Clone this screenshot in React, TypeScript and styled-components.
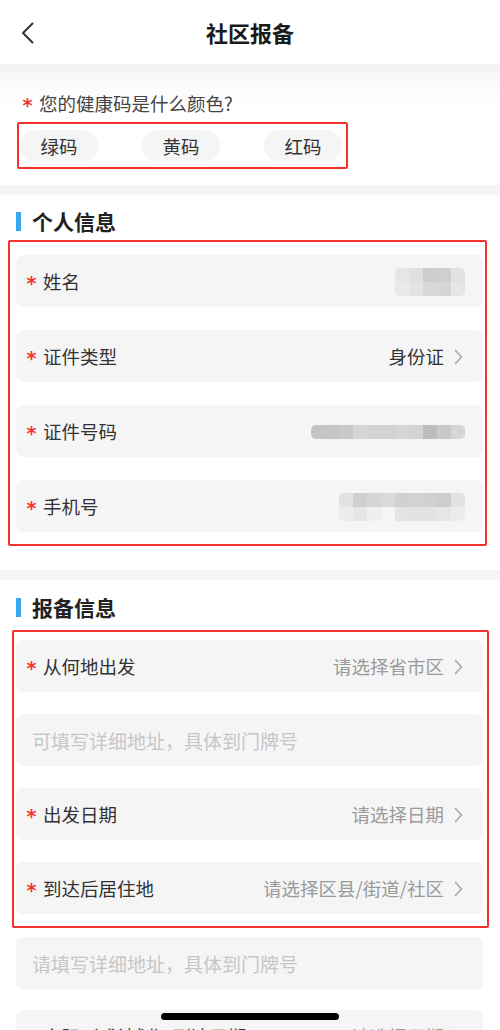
import styled, { createGlobalStyle } from "styled-components";

const GlobalStyle = createGlobalStyle`
    html, body {
        margin: 0;
        padding: 0;
        background: #ffffff;
    }
    body {
        font-family: "Noto Sans CJK SC", "Noto Sans", sans-serif;
        color: #333333;
    }
`;

const Page = styled.div`
    width: 500px;
    background: #ffffff;
`;

const Header = styled.header`
    display: grid;
    grid-template-columns: 1fr auto 1fr;
    align-items: center;
    height: 64px;
    padding: 0 20px;
    box-sizing: border-box;
    h1 {
        margin: 0;
        font-size: 22px;
        font-weight: 700;
        color: #1a1a1a;
        line-height: 1;
        padding-bottom: 1px;
    }
`;

const BackButton = styled.button`
    justify-self: start;
    border: 0;
    padding: 0;
    background: transparent;
    display: flex;
    margin-left: 1px;
    margin-top: 2px;
    svg {
        width: 13px;
        height: 22px;
    }
`;

const HealthSection = styled.section`
    padding: 26px 0 16px;
    background: linear-gradient(180deg, #f2f2f2 0, #fbfbfb 22px, #ffffff 44px);
`;

const Question = styled.div`
    display: flex;
    align-items: center;
    height: 26px;
    padding-left: 22px;
    margin-bottom: 6px;
    font-size: 18.5px;
    color: #444444;
`;

const Star = styled.span`
    color: #f2362f;
    font-family: "DejaVu Sans", sans-serif;
    font-size: 19px;
    font-weight: 700;
    line-height: 1;
    margin-top: 5px;
    width: 11px;
    margin-right: 6px;
    text-align: center;
`;

const Highlight = styled.div<{ $left: number; $width: number; $pad: string }>`
    box-sizing: border-box;
    margin-left: ${(p) => p.$left}px;
    width: ${(p) => p.$width}px;
    padding: ${(p) => p.$pad};
    border: 2px solid #f5312d;
    border-radius: 2px;
`;

const Pills = styled.div`
    display: flex;
    justify-content: space-between;
`;

const Pill = styled.button`
    width: 78px;
    height: 31px;
    border: 0;
    border-radius: 16px;
    background: #f5f5f6;
    font-family: inherit;
    font-size: 18.5px;
    color: #333333;
    padding: 0;
`;

const Band = styled.div`
    height: 10px;
    background: #f5f5f5;
`;

const Section = styled.section<{ $top: number; $bottom: number }>`
    padding: ${(p) => p.$top}px 0 ${(p) => p.$bottom}px;
`;

const SectionTitle = styled.h2<{ $gap: number }>`
    display: flex;
    align-items: center;
    margin: 0 0 ${(p) => p.$gap}px 16px;
    height: 26px;
    font-size: 21px;
    font-weight: 700;
    color: #222222;
    &::before {
        content: "";
        width: 5px;
        height: 19px;
        background: #3aa5f0;
        margin-right: 11px;
    }
`;

const Rows = styled.div<{ $gap: number }>`
    display: flex;
    flex-direction: column;
    gap: ${(p) => p.$gap}px;
`;

const Row = styled.div<{ $outside?: boolean }>`
    display: flex;
    align-items: center;
    height: 52px;
    border-radius: 7px;
    background: #f5f5f6;
    padding: 0 18px 0 10px;
    box-sizing: border-box;
    ${(p) => p.$outside ? "margin: 0 17px 0 16px;" : ""}
`;

const Label = styled.span`
    font-size: 18.5px;
    color: #333333;
    flex: 1;
    white-space: nowrap;
`;

const Value = styled.span<{ $muted?: boolean }>`
    font-size: 18.5px;
    color: ${(p) => (p.$muted ? "#9a9a9a" : "#333333")};
    white-space: nowrap;
`;

const Chevron = styled.svg`
    width: 9px;
    height: 16px;
    margin: 1px 2px 0 10px;
    flex-shrink: 0;
`;

const Placeholder = styled.span`
    padding-left: 6px;
    font-size: 19px;
    color: #c6c6c6;
    white-space: nowrap;
`;

const Mosaic = styled.div<{ $cols: number }>`
    display: grid;
    grid-template-columns: repeat(${(p) => p.$cols}, 14px);
    grid-auto-rows: 14px;
    border-radius: 5px;
    overflow: hidden;
    margin-top: 2px;
`;

const Cell = styled.div<{ $c: string }>`
    background: ${(p) => p.$c};
`;

const HomeIndicator = styled.div`
    position: fixed;
    left: 161px;
    bottom: 10px;
    width: 178px;
    height: 7px;
    border-radius: 4px;
    background: #000000;
`;

function Blur({ cols, cells }: { cols: number; cells: string[] }) {
    return (
        <Mosaic $cols={cols}>
            {cells.map((c, i) => <Cell key={i} $c={c} />)}
        </Mosaic>
    );
}

function Arrow() {
    return (
        <Chevron viewBox="0 0 9 16" fill="none">
            <polyline points="1.5,1.5 7.5,8 1.5,14.5" stroke="#a8a8a8" strokeWidth="1.6" strokeLinecap="round" strokeLinejoin="round" />
        </Chevron>
    );
}

type Field = {
    label: string;
    value?: string;
    muted?: boolean;
    arrow?: boolean;
    blur?: { cols: number; cells: string[] };
    placeholder?: string;
};

function FieldRow({ field, outside }: { field: Field; outside?: boolean }) {
    if (field.placeholder) {
        return (
            <Row $outside={outside}>
                <Placeholder>{field.placeholder}</Placeholder>
            </Row>
        );
    }
    return (
        <Row $outside={outside}>
            <Star>*</Star>
            <Label>{field.label}</Label>
            {field.blur ? <Blur cols={field.blur.cols} cells={field.blur.cells} /> : null}
            {field.value ? <Value $muted={field.muted}>{field.value}</Value> : null}
            {field.arrow ? <Arrow /> : null}
        </Row>
    );
}

const personal: Field[] = [
    {
        label: "姓名",
        blur: { cols: 5, cells: ["#e6e6e6", "#e0e0e0", "#cdcdcd", "#cfcfcf", "#e2e2e2", "#e9e9e9", "#e3e3e3", "#d8d8d8", "#d6d6d6", "#e6e6e6"] },
    },
    { label: "证件类型", value: "身份证", arrow: true },
    {
        label: "证件号码",
        blur: { cols: 11, cells: ["#c4c4c4", "#c6c6c6", "#c9c9c9", "#d6d6d6", "#d2d2d2", "#d2d2d2", "#d6d6d6", "#d4d4d4", "#bcbcbc", "#c9c9c9", "#d6d6d6"] },
    },
    {
        label: "手机号",
        blur: { cols: 9, cells: ["#e2e2e2", "#d0d0d0", "#d6d6d6", "#dadada", "#d0d0d0", "#d2d2d2", "#d0d0d0", "#cdcdcd", "#e2e2e2", "#ececec", "#e6e6e6", "#efefef", "#f5f5f6", "#e4e4e4", "#e2e2e2", "#e2e2e2", "#e6e6e6", "#ececec"] },
    },
];

const report: Field[] = [
    { label: "从何地出发", value: "请选择省市区", muted: true, arrow: true },
    { label: "", placeholder: "可填写详细地址，具体到门牌号" },
    { label: "出发日期", value: "请选择日期", muted: true, arrow: true },
    { label: "到达后居住地", value: "请选择区县/街道/社区", muted: true, arrow: true },
];

const Below = styled.div`
    display: flex;
    flex-direction: column;
    gap: 21px;
    margin-top: 9px;
    padding-bottom: 40px;
`;

export default function App() {
    return (
        <Page>
            <GlobalStyle />
            <Header>
                <BackButton aria-label="返回">
                    <svg viewBox="0 0 13 22" fill="none">
                        <polyline points="11.5,1.5 2,11 11.5,20.5" stroke="#333" strokeWidth="2" strokeLinecap="round" strokeLinejoin="round" />
                    </svg>
                </BackButton>
                <h1>社区报备</h1>
                <span />
            </Header>
            <HealthSection>
                <Question>
                    <Star>*</Star>
                    您的健康码是什么颜色?
                </Question>
                <Highlight $left={17} $width={331} $pad="6px 4px 6px 1px">
                    <Pills>
                        <Pill>绿码</Pill>
                        <Pill>黄码</Pill>
                        <Pill>红码</Pill>
                    </Pills>
                </Highlight>
            </HealthSection>
            <Band />
            <Section $top={13} $bottom={24}>
                <SectionTitle $gap={6}>个人信息</SectionTitle>
                <Highlight $left={8} $width={479} $pad="13px 2px 12px 6px">
                    <Rows $gap={23}>
                        {personal.map((f) => <FieldRow key={f.label} field={f} />)}
                    </Rows>
                </Highlight>
            </Section>
            <Band />
            <Section $top={14} $bottom={0}>
                <SectionTitle $gap={10}>报备信息</SectionTitle>
                <Highlight $left={12} $width={477} $pad="8px 4px 12px 2px">
                    <Rows $gap={22}>
                        {report.map((f, i) => <FieldRow key={i} field={f} />)}
                    </Rows>
                </Highlight>
                <Below>
                    <FieldRow outside field={{ label: "", placeholder: "请填写详细地址，具体到门牌号" }} />
                    <FieldRow outside field={{ label: "实际（或计划）到达日期", value: "请选择日期", muted: true, arrow: true }} />
                </Below>
            </Section>
            <HomeIndicator />
        </Page>
    );
}
